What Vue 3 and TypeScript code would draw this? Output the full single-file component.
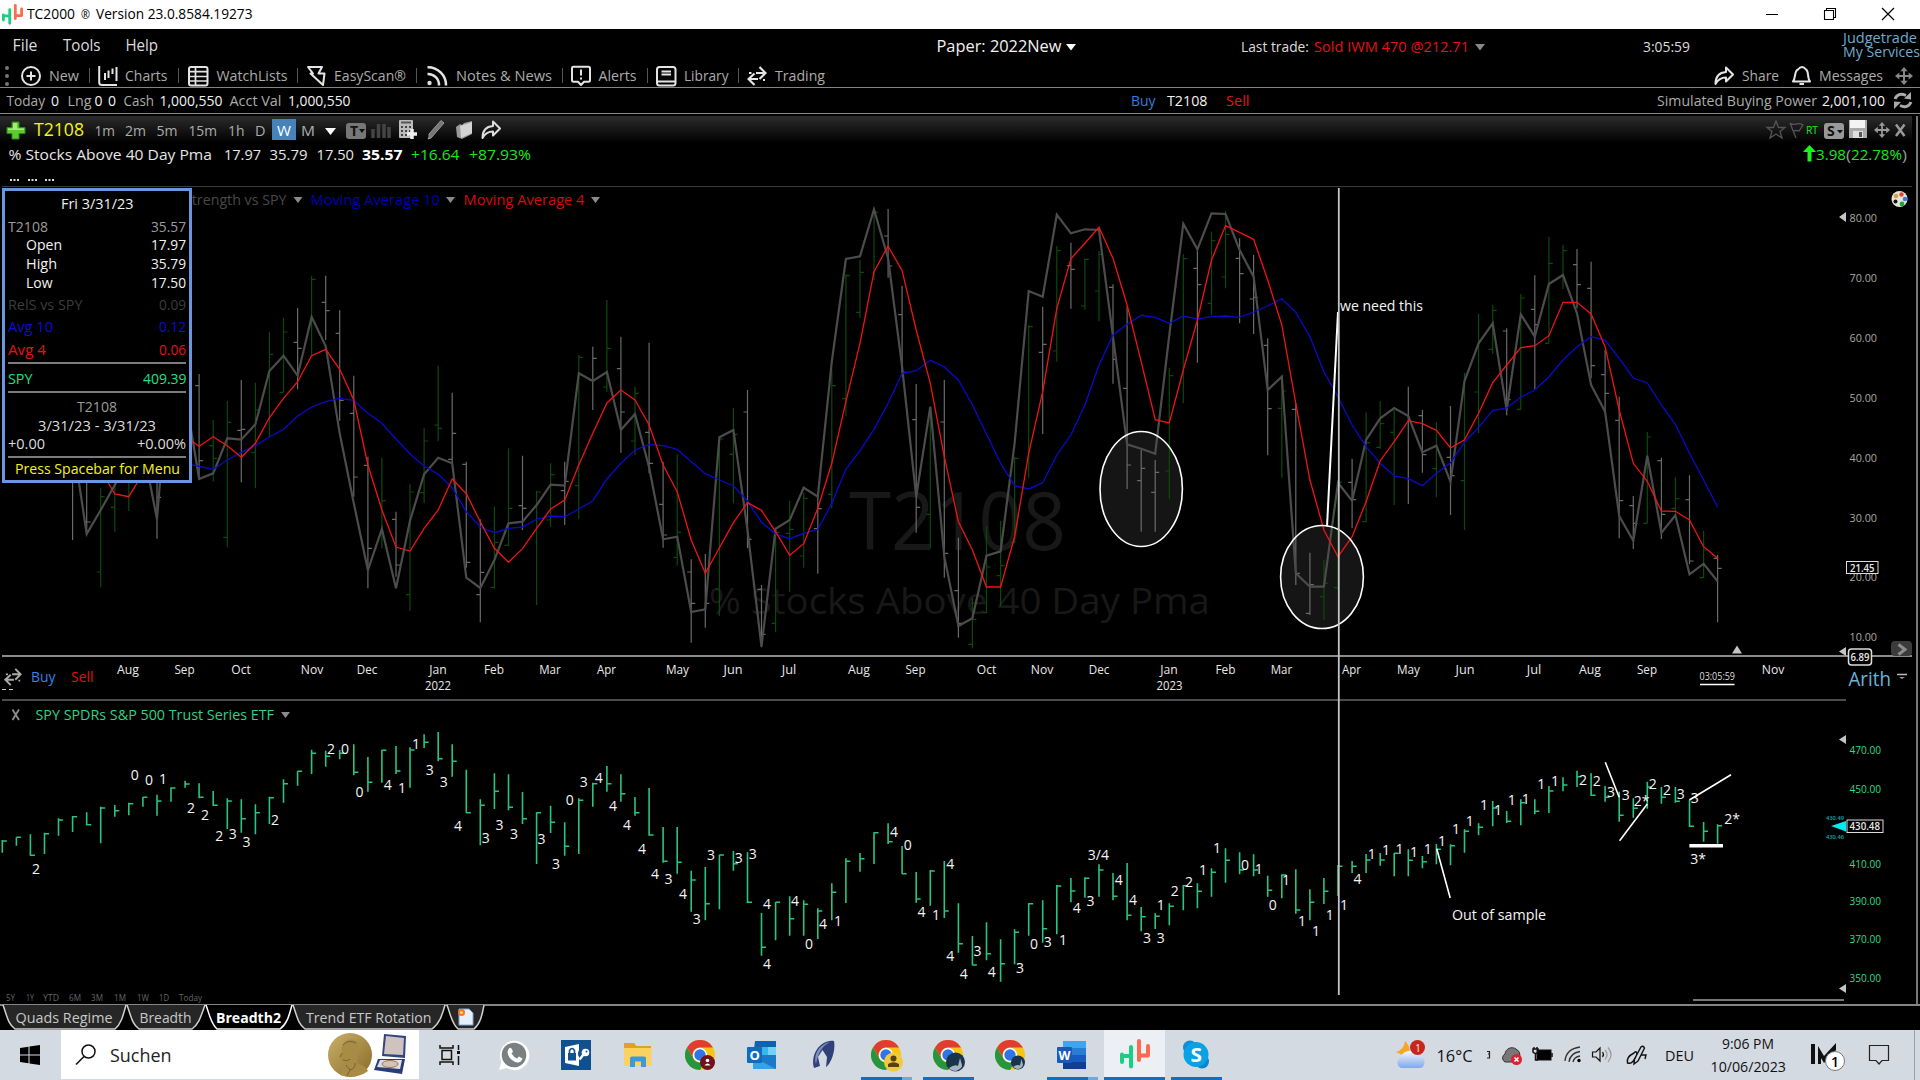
<script setup lang="ts">
import { h, type FunctionalComponent } from 'vue'

interface LabelProps { t: string; w: number; x?: number; s?: number }

// One run of text fitted to a known width, with optional leading space.
const T: FunctionalComponent<LabelProps> = (p) =>
  h('svg', { class: 't', width: (p.x ?? 0) + p.w, height: 20 }, [
    h('text', { x: p.x ?? 0, y: 15, 'font-size': p.s ?? 15, fill: 'currentColor', textLength: p.w, lengthAdjust: 'spacingAndGlyphs' }, p.t),
  ])
T.props = ['t', 'w', 'x', 's']

const barX = (i: number) => +(2.3 + 14.06 * i).toFixed(1)
const topY = (v: number) => +(180 + v / 3).toFixed(1)
const lowY = (v: number) => +(690 + v / 3).toFixed(1)

// Weekly breadth bars: colour, high, low, open, close (0 = no tick).
const breadth = `w,905,1080,0,0 w,905,1062,0,1026 g,925,1222,1176,950 g,905,1055,982,0 g,905,993,0,0 g,800,900,0,0 w,905,1076,0,952 g,700,850,0,0 g,700,850,0,0
w,582,895,617,842 g,720,905,797,835 g,663,1102,1072,727 w,600,907,751,748 g,608,925,817,690 g,455,770,0,523 g,413,637,637,456 w,384,628,487,505 g,287,525,0,298 w,287,480,367,392
w,391,722,460,661 w,587,950,700,891 w,830,1225,856,1105 g,833,1105,0,962 w,995,1190,1018,1155 g,913,1293,1244,936 g,745,970,938,783 g,557,783,735,745 w,638,850,838,760 w,845,1163,853,1147
w,1018,1327,1244,1177 g,980,1227,1222,1087 g,805,1098,1096,985 w,827,1050,977,985 g,932,1275,0,936 g,850,1040,1020,884 w,845,1035,932,904 g,525,1017,917,532 w,500,690,600,535 g,360,635,621,505
w,470,818,566,696 g,620,825,783,640 w,488,880,757,850 w,845,1103,973,1065 g,823,1157,1132,1057 w,1138,1388,1176,1270 w,1122,1343,0,1270 g,775,1307,1227,777 g,685,970,823,763 w,630,1105,696,1078
w,1215,1402,1228,1363 g,1060,1357,1330,1057 g,962,1235,1060,1048 g,938,1163,1128,955 w,950,1181,1046,986 g,570,985,943,617 g,283,707,656,287 g,240,415,397,277 g,90,300,0,97 w,87,293,168,258
w,317,590,404,577 w,612,1058,719,982 g,690,1105,1003,0 w,600,1193,726,1120 w,1073,1373,1232,1330 g,1255,1405,1393,1318 g,1040,1300,1298,1161 g,1023,1278,1187,1157 g,830,1090,1088,835 g,435,893,0,440
w,380,762,517,493 g,198,545,513,212 w,188,386,257,268 g,235,390,378,238 g,213,424,333,223 w,313,611,322,538 w,380,927,625,855 w,810,1055,902,865 w,840,1055,937,877 g,563,958,873,587
g,223,670,0,236 w,210,548,265,314 g,155,405,370,182 g,93,325,291,163 w,175,430,235,281 w,225,462,357,352 w,475,826,496,686 g,585,893,685,633 w,670,1215,688,1180 w,1118,1305,1300,1214
g,1140,1320,1250,1210 g,905,1230,1223,907 w,836,1045,907,959 g,697,1027,1025,788 g,663,806,802,731 g,690,975,757,0 w,620,972,0,0 w,690,878,707,824 g,725,952,866,0 w,678,1005,832,887
g,578,1050,902,0 g,401,760,636,0 g,375,521,508,391 w,445,706,453,659 g,342,690,688,354 w,286,627,388,434 g,170,490,490,250 g,195,327,0,212 w,207,385,254,314 w,245,595,325,557
w,510,700,584,640 w,650,1075,721,962 w,948,1107,977,1030 g,756,1030,1030,771 w,833,1077,842,1003 g,892,1005,985,956 w,886,1153,959,1143 g,1052,1195,1193,1110 w,1125,1327,1135,1165`
  .split(/\s+/).map((row, k) => {
    const [c, ...n] = row.split(',')
    const [hi, lo, op, cl] = n.map(Number)
    const x = barX(k + 5)
    let d = `M${x} ${topY(hi)}V${topY(lo)}`
    if (op) d += `M${x - 4} ${topY(op)}H${x}`
    if (cl) d += `M${x} ${topY(cl)}H${x + 4}`
    return { c, d }
  })

const joinLine = (first: number, s: string) =>
  s.trim().split(/\s+/).map((v, k) => `${barX(first + k)},${topY(+v)}`).join(' ')

const strength = joinLine(5, `780 1062 990 915 830 800 1018 500 640 897 880 775 779 733 573 527 587 411 498 760 970 1170 1047 1225 1022 883 833 850 1193 1224 1140 1030 1025 975 914 917 580 603 576 750 702
862 1078 1070 1296 1288 772 750 1050 1400 1046 1020 923 950 545 237 229 88 235 560 950 680 1130 1338 1315 1127 1114 790 333 350 104 160 148 150 470 793 806 821 465 131 208 100 102 210 290 630
590 1180 1220 1220 908 962 780 715 684 708 817 797 905 603 490 430 690 403 470 312 285 400 615 695 1008 1082 827 1058 1006 1183 1151 1204`)
const avg4 = joinLine(7, `870 942 950 880 800 760 770 799 770 797 832 790 713 655 605 527 508 568 660 855 990 1101 1113 1045 990 897 941 1025 1105 1147 1106 1045 987 960 855 760 669 630 660
735 855 935 1080 1180 1103 1028 968 991 1055 1126 1091 985 850 665 490 275 198 272 450 610 830 1025 1110 1221 1221 1070 820 635 385 236 190 142 235 375 545 719 729 570 420 240 137 157 178 300
435 670 900 1050 1130 1070 965 842 785 722 731 751 804 779 700 608 555 503 497 467 367 367 402 500 690 850 904 993 994 1020 1100 1135`)
const avg10 = joinLine(13, `850 859 868 840 817 797 771 748 708 681 665 655 661 700 730 777 822 858 883 923 995 1041 1058 1045 1041 1018 1008 1010 987 962 897 850 810
794 797 808 845 881 900 917 963 1027 1062 1076 1060 1048 970 868 812 748 670 580 572 541 560 600 675 762 850 917 927 908 825 765 675 555 465 433 406 412 430 408 417 410 408 412 396 378
356 397 470 575 650 735 800 850 888 896 917 880 848 787 742 692 684 652 630 590 540 500 470 480 535 594 609 675 733 820 900 981`)

// SPY weekly bars: high, low, close.
const spy = `450,488,453 442,467,442 433,497,496 428,492,431 385,437,390 378,426,380 367,406,404 350,460,354 345,380,362 338,376,341 321,350,322 314,377,333 292,335,294 272,293,282 280,325,322 303,348,346
325,417,333 328,428,386 343,433,368 320,402,323 268,338,281 243,287,244 179,252,190 182,230,199 180,208,190 163,256,247 201,305,277 179,278,181 168,252,243 172,293,180 133,174,157 126,214,206
163,260,214 239,369,368 328,466,346 250,357,304 253,361,352 306,402,386 367,522,368 347,429,397 397,497,469 325,492,331 278,350,281 228,305,281 253,335,311 321,377,368 294,437,435 411,518,514
411,551,517 542,665,570 531,691,641 494,658,495 483,542,521 487,639,637 669,797,772 636,751,637 619,737,686 631,737,643 655,747,663 580,691,607 505,639,514 489,545,506 427,522,428 400,462,455
468,552,551 546,638,627 540,647,543 513,684,663 640,788,761 738,826,825 697,811,791 748,875,821 718,823,727 640,737,641 631,758,716 585,733,588 564,637,603 562,623,565 523,620,540 549,631,619
519,691,676 651,724,680 670,717,679 640,706,649 585,661,587 580,655,604 535,620,547 475,578,511 487,553,540 493,559,540 557,620,601 553,625,555 538,671,660 598,691,637 564,642,604 525,618,529
513,549,529 492,549,510 489,527,510 489,559,490 478,559,511 498,535,515 462,523,478 463,526,467 418,488,424 400,436,412 333,409,354 363,399,394 328,406,338 328,373,364 288,369,303 262,304,285
242,291,260 250,318,316 288,335,322 305,395,376 325,383,355 275,356,291 291,341,322 291,338,334 331,411,409 396,455,424 403,461,407`
  .split(/\s+/).map((row, i) => {
    const [hi, lo, cl] = row.split(',').map(Number)
    return `M${barX(i)} ${lowY(hi)}V${lowY(lo)}M${barX(i)} ${lowY(cl)}h4.5`
  }).join('')

const placeMarks = (left: number, s: string) =>
  s.trim().split(/\s+/).map((m) => {
    const [x, y, t] = m.split(',')
    return { x: +(left + +x / 2.45).toFixed(1), y: +(lowY(+y) + 5).toFixed(1), t }
  })
const marks = [
  ...placeMarks(0, `88,537,2 330,254,0 365,269,0 399,266,1 468,353,2 502,375,2 537,438,2 570,431,3 604,455,3 674,390,2 811,176,2 845,176,0 881,305,0 950,284,4 985,293,1 1019,161,1 1053,239,3 1087,276,3
  1122,407,4 1190,443,3 1224,404,3 1259,431,3 1327,446,3 1362,521,3 1396,329,0 1430,275,3 1467,264,4 1502,348,4 1536,404,4`),
  ...placeMarks(640, `5,477,4 37,551,4 70,566,3 105,611,4 139,686,3 174,494,3 242,503,3 276,491,3 311,641,4 311,822,4 380,632,4 414,761,0 448,702,4 485,692,1 622,425,4 656,464,0 690,665,4 725,674,1
  760,521,4 760,797,4 793,852,4 827,782,3 862,845,4 931,834,3 965,761,0 999,755,3 1036,749,1 1070,653,4 1104,632,3 1123,494,3/4 1173,569,4 1208,629,4 1242,743,3 1276,743,3 1276,644,1 1310,602,2
  1345,575,2 1379,539,1 1414,473,1 1482,524,0 1516,536,1 1550,645,0`),
  ...placeMarks(1280, `15,569,1 54,694,1 88,722,1 122,674,1 157,644,1 190,566,4 225,491,1 260,479,1 293,476,1 328,485,1 362,476,1 397,452,1 431,416,1 465,392,1 500,344,1 534,359,1 568,329,1 602,326,1
  640,281,1 674,272,1 742,269,2 776,272,2 811,305,3 847,314,3 886,332,2* 913,281,2 948,300,2 982,311,3 1016,325,3 1108,388,2* 1024,508,3*`),
]

const monthWidth: Record<string, number> = { Aug: 22, Sep: 20, Oct: 19.5, Nov: 22.5, Dec: 20.5, Jan: 17.5, Feb: 20, Mar: 21.5, Apr: 19, May: 23, Jun: 19, Jul: 14.5 }
const months = ([['Aug', 128], ['Sep', 184.5], ['Oct', 241], ['Nov', 312], ['Dec', 367], ['Jan', 438], ['Feb', 494], ['Mar', 550], ['Apr', 606.5], ['May', 677.5], ['Jun', 733], ['Jul', 789], ['Aug', 859], ['Sep', 915.5], ['Oct', 986.5], ['Nov', 1042], ['Dec', 1099], ['Jan', 1169], ['Feb', 1225.5], ['Mar', 1281.5], ['Apr', 1351.5], ['May', 1408.5], ['Jun', 1465], ['Jul', 1534], ['Aug', 1590], ['Sep', 1647], ['Nov', 1773]] as [string, number][])
  .map(([t, c]) => ({ t, w: monthWidth[t], x: c - monthWidth[t] / 2 }))
const breadthAxis = [['80.00', 222], ['70.00', 282], ['60.00', 342], ['50.00', 402], ['40.00', 462], ['30.00', 522], ['20.00', 581], ['10.00', 641]] as [string, number][]
const spyAxis = [['470.00', 754.5], ['450.00', 793.3], ['410.00', 868.3], ['390.00', 905.8], ['370.00', 943], ['350.00', 982.2]] as [string, number][]
const ranges = [['5Y', 6, 9], ['1Y', 26, 8], ['YTD', 43, 16], ['6M', 69, 12], ['3M', 91, 12], ['1M', 114, 12], ['1W', 137, 12], ['1D', 159, 10], ['Today', 179, 23]] as [string, number, number][]
</script>

<template>
  <div class="app">
    <svg width="0" height="0" class="defs">
      <defs>
        <linearGradient id="gold" x1="0" y1="0" x2="1" y2="1"><stop offset="0" stop-color="#c9b06a" /><stop offset="1" stop-color="#8a6b28" /></linearGradient>
        <linearGradient id="cloud" x1="0" y1="0" x2="0" y2="1"><stop offset="0" stop-color="#f2f6ff" /><stop offset="1" stop-color="#7fa9ea" /></linearGradient>
        <symbol id="chrome" viewBox="0 0 30 30">
          <circle cx="15" cy="15" r="15" fill="#f9c513" />
          <path d="M2 7.5A15 15 0 0 1 28 7.5H15A7.5 7.5 0 0 0 8.5 18.7Z" fill="#e03c31" />
          <path d="M2 7.5A15 15 0 0 0 15 30L21.5 18.7A7.5 7.5 0 0 1 8.5 18.7Z" fill="#25963f" />
          <circle cx="15" cy="15" r="7.2" fill="#fff" /><circle cx="15" cy="15" r="5.7" fill="#2f74e8" />
        </symbol>
        <symbol id="tc" viewBox="0 0 30 30">
          <path d="M2 15.500V23M11 8V27.500M2 17H11" stroke="#18cf83" stroke-width="4" stroke-linecap="round" fill="none" />
          <path d="M19 2V21M28 7V16.500M19 16.500H28" stroke="#fb6b50" stroke-width="4" stroke-linecap="round" fill="none" />
        </symbol>
        <symbol id="share" viewBox="0 0 20 20"><path d="M12 1.500L19 8.500L12 15.500V11.500C7 11.500 4 13.500 1.500 18C1.500 11 5 6.500 12 6V1.500Z" fill="none" stroke="currentColor" stroke-width="2" stroke-linejoin="round" /></symbol>
        <symbol id="move" viewBox="0 0 20 20"><path d="M10 3V17M3 10H17" stroke="currentColor" stroke-width="2.200" /><path d="M10 0L14 4.800H6ZM10 20L14 15.200H6ZM0 10L4.800 6V14ZM20 10L15.200 6V14Z" fill="currentColor" /></symbol>
        <symbol id="swap" viewBox="0 0 20 20"><path d="M12.500 1L18.500 7L12.500 13M9 7H18M7.500 7.500L1.500 13L7.500 19M2 13H11" fill="none" stroke="currentColor" stroke-width="2.200" /><path d="M2 7H4.500M16 14H18" stroke="currentColor" stroke-width="2" /></symbol>
      </defs>
    </svg>

    <header class="title">
      <svg class="logo" width="21" height="21"><use href="#tc" width="21" height="21" /></svg>
      <T t="TC2000" :x="4" :w="48" :s="14.500" /><T t="®" :x="6" :w="9" :s="12.500" /><T t="Version 23.0.8584.19273" :x="6" :w="156.500" :s="14.500" />
      <div class="winbtns">
        <svg width="12" height="14"><path d="M0 7.500H12" stroke="#000" /></svg>
        <svg width="12" height="14"><path d="M.5 3.500H9.500V12.500H.5ZM2.500 3.500V1.500H11.500V10.500H9.500" fill="none" stroke="#000" stroke-width="1.100" /></svg>
        <svg width="12" height="14"><path d="M0 1L12 13M12 1L0 13" stroke="#000" stroke-width="1.200" /></svg>
      </div>
    </header>

    <nav class="menu">
      <T t="File" :x="12.500" :w="25" :s="16" /><T t="Tools" :x="25" :w="37.500" :s="16" /><T t="Help" :x="25.500" :w="32.500" :s="16" />
      <T class="white low" t="Paper: 2022New" :x="778.500" :w="125" :s="16" />
      <svg width="16" height="20"><path d="M4 8H14L9 14.500Z" fill="#fff" /></svg>
      <T class="low" t="Last trade:" :x="163" :w="68" :s="14" /><T class="red low" t="Sold IWM 470 @212.71" :x="5" :w="155" :s="14" />
      <svg width="17" height="20"><path d="M6 8H16L11 14.500Z" fill="#888" /></svg>
      <T class="low" t="3:05:59" :x="157" :w="47" :s="14" />
      <div class="account"><T t="Judgetrade" :w="74" :s="14" /><T t="My Services" :w="77" :s="14" /></div>
    </nav>

    <nav class="tools">
      <svg width="21" height="22"><g fill="#777"><circle cx="7" cy="2" r="2" /><circle cx="7" cy="10" r="2" /><circle cx="7" cy="18" r="2" /></g></svg>
      <svg width="20" height="22" class="ic"><circle cx="10" cy="10" r="9" /><path d="M10 5.500V14.500M5.500 10H14.500" /></svg>
      <T t="New" :x="8" :w="30" /><i class="sep" />
      <svg width="20" height="22" class="ic"><path d="M1.200 0V16.500Q1.200 19 4 19H19M7 7V14M10.500 4.500V12M14.500 2.500V8M18.500 1V15" stroke-width="2" /></svg>
      <T t="Charts" :x="7" :w="42.500" /><i class="sep" />
      <svg width="22" height="22" class="ic"><rect x="2" y="1" width="18.500" height="18.500" rx="2" /><path d="M2 5.700H20M2 10.500H20M2 15H20M8.500 1V19.500" stroke-width="1.700" /></svg>
      <T t="WatchLists" :x="7.500" :w="71" /><i class="sep" />
      <svg width="20" height="22" class="ic"><path d="M2 1H16L12.500 7.500H18.500L17 19L4.500 7.500H7Z" /></svg>
      <T t="EasyScan®" :x="8" :w="72" /><i class="sep" />
      <svg width="24" height="22" class="ic"><path d="M2.500 1.200A18 18 0 0 1 21 19.500M2.500 8A11 11 0 0 1 14 19.500" stroke-width="2.500" /><circle cx="4.500" cy="17" r="2.200" fill="#ddd" stroke="none" /></svg>
      <T t="Notes &amp; News" :x="7" :w="96" /><i class="sep" />
      <svg width="20" height="22" class="ic"><path d="M1 2Q1 .8 2.500.8H17.500Q19 .8 19 2.500V14Q19 15.800 17.500 15.800H13L10 19L7 15.800H2.500Q1 15.800 1 14ZM10 3.500V9.500M10 11.500V13.500" /></svg>
      <T t="Alerts" :x="7.500" :w="38" /><i class="sep" />
      <svg width="20" height="22" class="ic"><rect x="1" y="1" width="18.500" height="18.500" rx="2.500" /><path d="M1.500 15.500H19M5.500 5.500H15M5.500 8.500H15" /></svg>
      <T t="Library" :x="8" :w="44.500" /><i class="sep" />
      <svg width="20" height="22" class="lit"><use href="#swap" width="20" height="20" /></svg>
      <T t="Trading" :x="8" :w="50" />
      <div class="right">
        <svg width="20" height="22" class="lit"><use href="#share" width="20" height="20" /></svg>
        <T t="Share" :x="8" :w="37" />
        <svg width="33" height="22" class="ic"><path d="M15 15.500C18 12 16 5 20 3.500Q22 1 24 1Q26 1 28 3.500C31 5 29 12 32 15.500ZM21.500 18H26" transform="translate(-1 0)" /></svg>
        <T t="Messages" :x="7" :w="64" />
        <svg width="31" height="22" class="dim"><use href="#move" x="12" y="1" width="18" height="18" /></svg>
      </div>
    </nav>

    <div class="acct">
      <T t="Today" :x="6.500" :w="38.500" /><T class="white" t="0" :x="6" :w="8" /><T t="Lng" :x="8.500" :w="24" /><T class="white" t="0" :x="2.500" :w="8" /><T class="white" t="0" :x="6" :w="8" />
      <T t="Cash" :x="7.500" :w="30.500" /><T class="white" t="1,000,550" :x="5.500" :w="63" /><T t="Acct Val" :x="6.500" :w="52" /><T class="white" t="1,000,550" :x="7" :w="62.500" />
      <T class="blue" t="Buy" :x="780" :w="24.500" :s="14.500" /><T class="white" t="T2108" :x="12" :w="40.500" :s="14.500" /><T class="red" t="Sell" :x="18" :w="23.500" :s="14.500" />
      <div class="right">
        <T t="Simulated Buying Power" :w="160" /><T class="white" t="2,001,100" :x="5" :w="63" />
        <svg width="27" height="20"><path d="M10 8Q13 1 21 4.500M26 11Q23 18 15 14.500" fill="none" stroke="#aaa" stroke-width="3" /><path d="M19 7.500L26 1V8.500ZM16 11L9 18V10.500Z" fill="#aaa" /></svg>
      </div>
    </div>

    <section class="head">
      <div class="hrow">
        <svg width="32" height="24"><path d="M10 3H17V8.500H23V14.500H17V20H10V14.500H5V8.500H10Z" fill="#5ccb2c" stroke="#2d8a12" /><path d="M11 4H15V9.500H22V11H6V9.500H11Z" fill="#a2ec78" /></svg>
        <T class="yellow" t="T2108" :x="0" :w="50" :s="18" />
        <T t="1m" :x="10.500" :w="20.500" /><T t="2m" :x="10" :w="21" /><T t="5m" :x="10.500" :w="21" /><T t="15m" :x="10.500" :w="28.500" /><T t="1h" :x="11" :w="16.500" /><T t="D" :x="11" :w="10.500" />
        <span class="on"><T t="W" :x="5" :w="14" /></span><T t="M" :x="5" :w="14" />
        <svg width="190" height="24">
          <path d="M10 9H21L15.500 16Z" fill="#fff" />
          <rect x="31" y="4" width="20" height="16" rx="3" fill="#777" /><text x="35" y="17" font-size="14" font-weight="700" fill="#111">T</text><path d="M44 10H50L47 14Z" fill="#111" />
          <path d="M58 19V10M63.500 19V5M69 19V5M74 19V8" stroke="#444" stroke-width="3.500" />
          <rect x="84" y="1" width="14" height="18" rx="1" fill="#bbb" /><path d="M86 3.500H96" stroke="#555" stroke-width="2" /><path d="M86 8H96M86 12H96M86 16H96" stroke="#444" stroke-width="2" stroke-dasharray="2 2" /><path d="M97 10V20M92 15H102" stroke="#eee" stroke-width="3.500" />
          <path d="M114 18L113 20L116 19L129 4L126 1.500L114 15Z" fill="#777" stroke="#999" />
          <path d="M141 8L145 5L147 6L149 4L157 2V15L147 20L142 18Z" fill="#999" /><path d="M145 7L157 3V14L146 19Z" fill="#d4d4d4" />
          <use href="#share" x="166" y="1" width="20" height="20" color="#ddd" />
        </svg>
        <div class="right">
          <svg width="40" height="24"><path d="M11 2L13.500 8.500H20L15 12.500L17 19L11 15L5 19L7 12.500L2 8.500H8.500Z" fill="none" stroke="#555" stroke-width="1.300" /><path d="M25 4L31 19M25 4C29 8 32 2 38 6L34 12Q31 11 28 12" fill="none" stroke="#555" stroke-width="1.300" /></svg>
          <T class="lime rt" t="RT" :x="1" :w="12" :s="11" />
          <svg width="94" height="24"><rect x="6" y="4" width="20" height="16" rx="3" fill="#999" /><text x="9" y="17" font-size="14" font-weight="700" fill="#111">S</text><path d="M19 11H25L22 14.500Z" fill="#111" /><rect x="31" y="1" width="18" height="18" fill="#aaa" /><path d="M32 1H47V9H32Z" fill="#f4f4f4" /><path d="M35 12H45V19H35Z" fill="#ddd" /><path d="M41 13H44V18H41Z" fill="#555" /><use href="#move" x="56" y="3" width="16" height="16" color="#999" /><path d="M78 5.500L86.500 17M86.500 5.500L78 17" stroke="#999" stroke-width="2.500" /></svg>
        </div>
      </div>
      <div class="hrow2">
        <T t="% Stocks Above 40 Day Pma" :x="8.500" :w="203.500" /><T t="17.97" :x="12" :w="37" /><T t="35.79" :x="8.500" :w="38" /><T t="17.50" :x="8.500" :w="37.500" /><T class="bold" t="35.57" :x="8" :w="40.500" />
        <T class="lime" t="+16.64" :x="9" :w="48.500" /><T class="lime" t="+87.93%" :x="9" :w="62" />
        <div class="right"><svg width="13" height="20"><path d="M6.500 0L13 7H8.500V16.500H4.500V7H0Z" fill="#1bf41b" /></svg><T class="lime" t="3.98" :w="30" /><T class="grey" t="(" :w="5" /><T class="lime" t="22.78%" :w="51" /><T class="grey" t=")" :w="5" /></div>
      </div>
      <svg class="dots" width="60" height="6"><path d="M10 3H19M28 3H37M45 3H54" stroke="#ddd" stroke-width="2" stroke-dasharray="2 1.500" /></svg>
    </section>

    <main class="charts">
      <svg width="1920" height="818" viewBox="0 186 1920 818">
        <path d="M2 186.500H1912" stroke="#3a3a3a" />
        <g fill="#181818"><text x="849" y="549.500" font-size="80" textLength="217" lengthAdjust="spacingAndGlyphs">T2108</text><text x="709" y="613.500" font-size="37" textLength="501" lengthAdjust="spacingAndGlyphs">% Stocks Above 40 Day Pma</text></g>
        <g fill="#151515"><ellipse cx="1141.200" cy="489" rx="41.200" ry="57.500" /><ellipse cx="1322" cy="577" rx="41.400" ry="51.500" /></g>
        <path v-for="(b, i) in breadth" :key="i" :d="b.d" :class="b.c" />
        <polyline :points="strength" fill="none" stroke="#4c4c4c" stroke-width="2.200" />
        <polyline :points="avg10" fill="none" stroke="#0a0ad0" stroke-width="1.300" />
        <polyline :points="avg4" fill="none" stroke="#f01414" stroke-width="1.300" />
        <g fill="none" stroke="#fff" stroke-width="1.600"><ellipse cx="1141.200" cy="489" rx="41.200" ry="57.500" /><ellipse cx="1322" cy="577" rx="41.400" ry="51.500" /><path d="M1338 312L1327 526.500" stroke-width="2" /></g>

        <g font-size="15">
          <text x="184" y="205" fill="#484848" textLength="102.500" lengthAdjust="spacingAndGlyphs">Strength vs SPY</text>
          <text x="310.500" y="205" fill="#0000b4" textLength="129.500" lengthAdjust="spacingAndGlyphs">Moving Average 10</text>
          <text x="463.500" y="205" fill="#d40c0c" textLength="121" lengthAdjust="spacingAndGlyphs">Moving Average 4</text>
        </g>
        <path d="M293.500 197H302.500L298 203ZM446 197H455L450.500 203ZM591 197H600L595.500 203ZM281 712H290L285.500 718Z" fill="#8a8a8a" />

        <path d="M2 656H1912" stroke="#b8bcb8" stroke-width="1.600" />
        <path d="M2 700H1846" stroke="#4c4c4c" stroke-width="2" />
        <g fill="#e8e8e8" font-size="13">
          <text v-for="m in months" :key="m.x" :x="m.x" y="674" :textLength="m.w" lengthAdjust="spacingAndGlyphs">{{ m.t }}</text>
          <text x="425" y="690" textLength="26" lengthAdjust="spacingAndGlyphs">2022</text><text x="1156.500" y="690" textLength="26" lengthAdjust="spacingAndGlyphs">2023</text>
        </g>
        <use href="#swap" x="4" y="667" width="18" height="20" color="#aaa" /><path d="M2 689.500H6M9 689.500H13" stroke="#ccc" />
        <text x="31" y="681.500" font-size="15" fill="#2f86e8" textLength="24.500" lengthAdjust="spacingAndGlyphs">Buy</text><text x="71" y="681.500" font-size="15" fill="#e01010" textLength="22.500" lengthAdjust="spacingAndGlyphs">Sell</text>
        <text x="1699.500" y="680" font-size="10.500" fill="#ddd" textLength="35.500" lengthAdjust="spacingAndGlyphs">03:05:59</text><path d="M1700 684.500H1734.500" stroke="#fff" stroke-width="1.400" />

        <path d="M1846 212V222L1839 217ZM1846 647V656L1839 651.500ZM1846 735V744L1839 739.500ZM1846 984V993L1839 988.500ZM1732 653.500H1742L1737 645.500Z" fill="#c4c4c4" />
        <g font-size="11.500" fill="#a8a8a8"><text v-for="a in breadthAxis" :key="a[1]" :x="1849.500" :y="a[1]" textLength="27.500" lengthAdjust="spacingAndGlyphs">{{ a[0] }}</text></g>
        <g font-size="11.500" fill="#2bdc8b"><text v-for="a in spyAxis" :key="a[1]" :x="1849.500" :y="a[1] - .5" textLength="31.500" lengthAdjust="spacingAndGlyphs">{{ a[0] }}</text></g>
        <g fill="#000" stroke="#ddd"><rect x="1846.500" y="561.500" width="31.500" height="12" /><rect x="1848.500" y="649" width="23" height="16" rx="3" stroke-width="1.500" /><rect x="1847" y="820" width="36" height="12.500" /></g>
        <g font-size="11" font-weight="600" fill="#e8e8e8"><text x="1850" y="571.500" textLength="24.500" lengthAdjust="spacingAndGlyphs">21.45</text><text x="1850.500" y="661" textLength="19" lengthAdjust="spacingAndGlyphs">6.89</text><text x="1849.500" y="830" textLength="30.500" lengthAdjust="spacingAndGlyphs">430.48</text></g>
        <path d="M1831 826L1846 821V831.500Z" fill="#00eaf2" />
        <g font-size="6" fill="#16a8b4" font-weight="600"><text x="1826" y="819.500" textLength="18" lengthAdjust="spacingAndGlyphs">430.49</text><text x="1826" y="838.500" textLength="18" lengthAdjust="spacingAndGlyphs">430.46</text></g>
        <text x="1848.500" y="686" font-size="20" fill="#69b4da" textLength="42.500" lengthAdjust="spacingAndGlyphs">Arith</text><path d="M1897 674.500H1907" stroke="#bbb" stroke-width="1.500" /><path d="M1899 677H1905L1902 679Z" fill="#999" />
        <circle cx="1899.500" cy="199" r="8" fill="#e8e4dc" /><circle cx="1896" cy="196" r="2.300" fill="#d6a53a" /><circle cx="1901.500" cy="194.500" r="2.200" fill="#e0492e" /><circle cx="1905" cy="199" r="2.300" fill="#2f7be0" /><circle cx="1902" cy="204" r="2.400" fill="#27a33b" /><circle cx="1895.500" cy="201.500" r="2" fill="#111" />
        <rect x="1891" y="641" width="21" height="15" rx="4" fill="#3b3b3b" /><path d="M1898.500 644.500L1905 649.500L1898.500 654.500" fill="none" stroke="#8c8c8c" stroke-width="3" />

        <path d="M12.500 709.500L19 720M19 709.500L12.500 720" stroke="#8a8a8a" stroke-width="1.900" />
        <text x="35.500" y="720" font-size="15" fill="#2bd487" textLength="238.500" lengthAdjust="spacingAndGlyphs">SPY SPDRs S&amp;P 500 Trust Series ETF</text>
        <path :d="spy" stroke="#27c581" stroke-width="1.600" fill="none" />
        <path d="M1338.800 188V995" stroke="#c4c4c4" stroke-width="1.800" />
        <g font-size="14" fill="#f4f4f4" text-anchor="middle"><text v-for="(m, i) in marks" :key="i" :x="m.x" :y="m.y">{{ m.t }}</text></g>
        <g font-size="14.500" fill="#f4f4f4"><text x="1340" y="311" textLength="83" lengthAdjust="spacingAndGlyphs">we need this</text><text x="1452" y="920" textLength="94" lengthAdjust="spacingAndGlyphs">Out of sample</text></g>
        <path d="M1605.300 762.300L1619.200 797.300M1619.600 840.700L1647.300 804M1689.400 800L1731 774.700M1436.700 848.700L1450.200 898" stroke="#fff" stroke-width="1.600" />
        <path d="M1689.400 845.700H1723" stroke="#fff" stroke-width="3.500" />
        <g font-size="8.500" fill="#666"><text v-for="r in ranges" :key="r[0]" :x="r[1]" y="1001" :textLength="r[2]" lengthAdjust="spacingAndGlyphs">{{ r[0] }}</text></g>
        <path d="M1693 1000H1844" stroke="#777" stroke-width="2" />
      </svg>

      <aside class="tip">
        <div class="line first"><T t="Fri 3/31/23" :w="72.500" /></div>
        <div class="line pair grey r18"><T t="T2108" :w="40" /><T t="35.57" :w="35" /></div>
        <div class="line pair in r18"><T t="Open" :w="36" /><T t="17.97" :w="35" /></div>
        <div class="line pair in r18"><T t="High" :w="31" /><T t="35.79" :w="35" /></div>
        <div class="line pair in r22"><T t="Low" :w="26.500" /><T t="17.50" :w="35" /></div>
        <div class="line pair dark r22"><T t="RelS vs SPY" :w="74.500" /><T t="0.09" :w="27" /></div>
        <div class="line pair navy r22"><T t="Avg 10" :w="45" /><T t="0.12" :w="27" /></div>
        <div class="line pair red r22"><T t="Avg 4" :w="38" /><T t="0.06" :w="27" /></div>
        <hr>
        <div class="line pair green r22"><T t="SPY" :w="24.500" /><T t="409.39" :w="43.500" /></div>
        <hr>
        <div class="line grey r19 up"><T t="T2108" :w="40" /></div>
        <div class="line pale r19"><T t="3/31/23 - 3/31/23" :w="118" /></div>
        <div class="line pair pale r21"><T t="+0.00" :w="37" /><T t="+0.00%" :w="49" /></div>
        <hr class="last">
        <div class="line yellow"><T t="Press Spacebar for Menu" :w="165" /></div>
      </aside>
      <i class="edge" />
    </main>

    <footer class="tabs">
      <svg width="500" height="26">
        <g fill="#262626" stroke="#d0d0d0" stroke-width="1.500">
          <path d="M3 1C7 12 8 20 15 25H115C121 20 123 12 126 1" /><path d="M127 1C131 12 132 20 139 25H192C199 20 201 12 205 1" /><path d="M293 1C297 12 298 20 305 25H432C439 20 442 12 445 1" /><path d="M447 1C451 12 452 20 458 25H474C480 20 482 12 484 1" />
          <path d="M206 1C210 12 211 20 217 25H280C287 20 289 12 292 1" fill="#000" stroke="#fff" />
        </g>
        <g font-size="15" fill="#c8c8c8"><text x="15.500" y="18.500" textLength="97" lengthAdjust="spacingAndGlyphs">Quads Regime</text><text x="139.500" y="18.500" textLength="52" lengthAdjust="spacingAndGlyphs">Breadth</text><text x="216" y="18.500" font-weight="700" fill="#fff" textLength="65" lengthAdjust="spacingAndGlyphs">Breadth2</text><text x="306" y="18.500" textLength="125.500" lengthAdjust="spacingAndGlyphs">Trend ETF Rotation</text></g>
        <path d="M459 5H469L473 9V21H459Z" fill="#e6effb" stroke="#86a6cc" /><circle cx="461.500" cy="8.500" r="3.500" fill="#f0772b" /><circle cx="461.500" cy="8.500" r="1.600" fill="#ffd36b" />
      </svg>
    </footer>

    <footer class="task">
      <div class="start"><svg width="20" height="20"><path d="M0 3L8.500 1.700V9.400H0ZM9.500 1.500L20 0V9.400H9.500ZM0 10.500H8.500V18.300L0 17ZM9.500 10.500H20V20L9.500 18.500Z" /></svg></div>
      <div class="search">
        <svg width="22" height="22"><circle cx="13.500" cy="7.500" r="6.500" fill="none" stroke="#111" stroke-width="1.500" /><path d="M9 12.500L1 20.500" stroke="#111" stroke-width="1.600" /></svg>
        <T t="Suchen" :x="13" :w="61.500" :s="18.500" />
        <svg class="prize" width="80" height="46">
          <circle cx="22" cy="23" r="22" fill="url(#gold)" /><path d="M12 43C12 36 18 35 18 31Q13 31 13.500 27L11.500 25L14 21Q12 11 20 8Q29 6 31 14Q32 20 29 24Q28 30 31 32Q38 34 40 39Q28 48 12 43Z" fill="#a88b45" /><path d="M15 13Q20 7 28 11M14 21L12 25M15 28Q19 30 22 27M18 33L22 38L19 44M27 31Q28 36 22 38" stroke="#7a6130" stroke-width="1" fill="none" />
          <path d="M56 2L78 4L77 26L54 24Z" fill="#33457f" /><path d="M58 4L76 6L75 23L56 22Z" fill="#cfc3c2" /><path d="M50 27L77 27L74 42L46 38Z" fill="#283c7b" /><path d="M52 28L74 28L72 37L49 35Z" fill="#e4dddd" /><ellipse cx="62" cy="32" rx="8" ry="3.500" fill="#d4c5b2" stroke="#8d7a62" />
        </svg>
      </div>
      <svg width="685" height="50" viewBox="419 0 685 50">
        <path d="M440 15V18H453V15M440 35V32H453V35M442 20.500H451.500V29.500H442ZM458.500 15V20M458.500 26V35" fill="none" stroke="#111" stroke-width="1.500" /><rect x="457" y="21" width="3" height="3" fill="#111" />
        <path d="M499 40L501.500 32A14.700 14.700 0 1 1 507 38Z" fill="#fff" /><circle cx="514" cy="25" r="12.300" fill="#7b8082" /><path d="M508.500 19Q510 17 511.500 18.500L513 21.500Q512 23 511.500 23.500Q514 27.500 517 28.500L519 26.500L522.500 28.500Q521 33 517 32.500Q508 29.500 507.500 22Z" fill="#fff" />
        <rect x="561" y="10" width="30" height="30" fill="#11508f" /><path d="M565 17L579 14V20Q577 24 579 27V36L565 33Z" fill="#fff" /><rect x="568" y="23" width="8" height="7.500" fill="#11508f" /><path d="M569.500 23V20.500Q572 16.500 574.500 20.500V23" fill="none" stroke="#11508f" stroke-width="1.600" /><circle cx="585.500" cy="22.500" r="3.800" fill="#fff" /><circle cx="586.500" cy="21.500" r="1" fill="#11508f" /><path d="M583.500 24.500L579.500 29.500" stroke="#fff" stroke-width="2.500" />
        <path d="M624 13H634L636.500 16H651V36H624Z" fill="#dda322" /><path d="M624 18H651.500V36H624Z" fill="#fbd260" /><path d="M630 37V28Q630 26.500 632 26.500H644Q646 26.500 646 28V37H641V31.500H635V37Z" fill="#3f98d8" />
        <use href="#chrome" x="685" y="10" width="30" height="30" /><circle cx="707.500" cy="32.500" r="7.500" fill="#721118" /><circle cx="707.500" cy="30.500" r="1.800" fill="#fff" /><path d="M704.500 35.500Q707.500 31.500 710.500 35.500Z" fill="#fff" />
        <path d="M755 11H776V39H753V25Z" fill="#1e78c8" /><path d="M755 11H776V17H755Z" fill="#0f62ad" /><path d="M761 17H768V25H761Z" fill="#38b6ef" /><path d="M768 17H776V25H768Z" fill="#72d3f7" /><path d="M753 27L776 39H753Z" fill="#37a1e6" /><rect x="747" y="17" width="15" height="16" rx="1" fill="#0f6cbd" /><text x="749.500" y="30" font-size="13" font-weight="700" fill="#fff">O</text>
        <path d="M814 38C810 24 821 9 834 11C836 22 830 35 826 37L827 27L822.500 20L818 27L820 36Z" fill="#304179" /><path d="M816 34C813 24 820 14 830 12C822 16 818 23 816 34Z" fill="#7c91c0" />
        <use href="#chrome" x="871" y="10" width="30" height="30" /><circle cx="893.500" cy="32" r="9.500" fill="#f1c93d" /><circle cx="893.500" cy="28.500" r="3" fill="#57420f" /><path d="M888 37V34Q893.500 30.500 899 34V37Z" fill="#57420f" />
        <use href="#chrome" x="933" y="10" width="30" height="30" /><circle cx="955.500" cy="32" r="9.500" fill="#18354d" /><path d="M949 38Q955 34 958 36L960 28L962 35Q963 38 956 41Q951 41 949 38Z" fill="#a6b4be" />
        <use href="#chrome" x="995" y="10" width="30" height="30" /><circle cx="1018" cy="32.500" r="7" fill="#18354d" /><path d="M1013 37Q1017 34 1020 35.500L1021.500 29L1023 35Q1022 39 1017 39Z" fill="#a6b4be" />
        <path d="M1063 11H1086V39H1063Z" fill="#185abd" /><path d="M1063 11H1086V18H1063Z" fill="#41a5ee" /><path d="M1063 18H1086V25H1063Z" fill="#2b7cd3" /><path d="M1063 32H1086V39H1063Z" fill="#103f91" /><rect x="1057" y="17" width="15" height="16" rx="1" fill="#185abd" /><text x="1058.500" y="29.500" font-size="12" font-weight="700" fill="#fff" textLength="12" lengthAdjust="spacingAndGlyphs">W</text>
        <path d="M861 47H902V50H861ZM923 47H974V50H923ZM1047 47H1088V50H1047Z" fill="#0f6ec6" /><path d="M902 47H912V50H902ZM1088 47H1098V50H1088Z" fill="#72a9dd" />
      </svg>
      <div class="current"><svg width="30" height="30"><use href="#tc" width="30" height="30" /></svg></div>
      <svg width="755" height="50" viewBox="1165 0 755 50">
        <path d="M1171 47H1222V50H1171Z" fill="#0f6ec6" />
        <circle cx="1190" cy="17.500" r="7" fill="#0a8fd8" /><circle cx="1202" cy="31.500" r="7" fill="#0a84cc" /><circle cx="1196" cy="24.500" r="12.500" fill="#0ba1e4" /><text x="1190.500" y="32" font-size="20" font-weight="700" fill="#fff" textLength="11.500" lengthAdjust="spacingAndGlyphs">S</text>
        <path d="M1396 22Q1404 20 1405 11Q1414 20 1405 26Z" fill="#f5a623" /><path d="M1401 38A6 6 0 0 1 1401 27A9 9 0 0 1 1417 25Q1425 26 1424.500 33Q1424 38 1419 38Z" fill="url(#cloud)" /><circle cx="1417.500" cy="17.500" r="7.500" fill="#c8261d" /><text x="1415.500" y="22" font-size="11" fill="#fff" textLength="5" lengthAdjust="spacingAndGlyphs">1</text>
        <g fill="#111">
          <text x="1436.500" y="31.500" font-size="16" textLength="36" lengthAdjust="spacingAndGlyphs">16°C</text>
          <text x="1665" y="31" font-size="14.500" textLength="29" lengthAdjust="spacingAndGlyphs">DEU</text>
          <text x="1722" y="19" font-size="14.500" textLength="52" lengthAdjust="spacingAndGlyphs">9:06 PM</text>
          <text x="1710.500" y="42" font-size="14.500" textLength="75.500" lengthAdjust="spacingAndGlyphs">10/06/2023</text>
        </g>
        <path d="M1487 21.500H1489.500V24H1488M1489.500 24V28H1487" fill="none" stroke="#222" stroke-width="1.200" />
        <path d="M1505 32A4.500 4.500 0 0 1 1505 24A7 7 0 0 1 1516 19Q1520 21 1520 25L1515 32Z" fill="#777" stroke="#333" /><circle cx="1516.500" cy="29.500" r="5.500" fill="#d32533" /><path d="M1514.500 27.500L1518.500 31.500M1518.500 27.500L1514.500 31.500" stroke="#fff" stroke-width="1.500" />
        <rect x="1537" y="20" width="14" height="10" fill="#000" stroke="#111" /><path d="M1552 23V27M1533 19H1538V22Q1535.500 25 1533 22ZM1534 17V19M1537 17V19M1535.500 24V30H1538" fill="none" stroke="#111" stroke-width="1.500" />
        <path d="M1565 31Q1566 19 1580 17M1569 32Q1570 23 1580 21.500M1573 32Q1574 27 1580 26" fill="none" stroke="#333" stroke-width="1.300" /><circle cx="1579" cy="30.500" r="1.700" />
        <path d="M1592.500 22H1596L1600 18V31L1596 27H1592.500Z" fill="none" stroke="#111" stroke-width="1.200" /><path d="M1602.500 22Q1604.500 24.500 1602.500 27" fill="none" stroke="#111" stroke-width="1.200" /><path d="M1605 20Q1609 24.500 1605 29.500M1608 17.500Q1614 24.500 1608 32" fill="none" stroke="#999" stroke-width="1.200" />
        <path d="M1638 31L1634 34L1634.500 29L1641 17Q1643 15 1644.500 18ZM1634 23Q1626 27 1627.500 33Q1633 35 1637 24Q1636 20 1634 23M1641 25H1646L1645 29" fill="none" stroke="#111" stroke-width="1.400" />
        <path d="M1811 14H1815V34H1811ZM1818 34V16L1824 26L1836 13V20L1824 33L1821 28V34Z" fill="#111" /><circle cx="1835" cy="31" r="9.500" fill="#fff" stroke="#777" /><text x="1831" y="36.500" font-size="15" font-weight="600" textLength="8" lengthAdjust="spacingAndGlyphs">1</text>
        <path d="M1869.500 15.500H1888.500V30.500H1882L1879 34L1876 30.500H1869.500Z" fill="none" stroke="#222" stroke-width="1.200" /><path d="M1914.500 0V50" stroke="#9aa3ad" />
      </svg>
    </footer>
  </div>
</template>

<style>
body { margin: 0; background: #000; overflow: hidden; }
</style>

<style scoped>
.app { width: 1920px; height: 1080px; background: #000; color: #acacac; font-family: "Open Sans", "Noto Sans", sans-serif; display: flex; flex-direction: column; overflow: hidden; }
svg { display: block; flex: none; overflow: visible; }
.defs { position: absolute; }
.title { height: 29px; flex: none; background: #fff; color: #000; display: flex; box-sizing: border-box; padding: 4px 26px 0 2px; }
.winbtns { margin-left: auto; display: flex; gap: 46px; padding-top: 3px; }
.menu { height: 32px; flex: none; display: flex; padding-top: 6.500px; box-sizing: border-box; color: #dcdcdc; }
.low { margin-top: 1px; }
.account { margin-left: auto; margin-top: -7.500px; color: #6cacd0; display: grid; grid-auto-rows: 14px; }
.tools { height: 26px; flex: none; display: flex; padding-top: 4.500px; box-sizing: border-box; }
.sep { width: 1px; height: 15px; margin: 2px 8px 0 10px; background: #555; flex: none; }
.ic { fill: none; stroke: #e4e4e4; stroke-width: 2; stroke-linejoin: round; }
.lit { color: #e4e4e4; }
.dim { color: #888; }
.right { display: flex; margin-left: auto; padding-right: 6px; }
.acct { height: 27px; flex: none; display: flex; box-sizing: border-box; padding-top: 3px; border-top: 1px solid #848484; border-bottom: 1px solid #848484; }
.acct .right { padding-right: 8.500px; }
.white { color: #f2f2f2; }
.red { color: #e61212; }
.blue { color: #2f7fe0; }
.yellow { color: #f4f41c; }
.lime { color: #1be81b; }
.grey { color: #9c9c9c; }
.pale { color: #ddd; }
.dark { color: #3c3c3c; }
.navy { color: #0c0cd8; }
.green { color: #1fe087; }
.bold { font-weight: 700; color: #fff; }
.head { height: 72px; flex: none; margin: 0 8px 0 0; box-sizing: border-box; padding-top: 5px; background: linear-gradient(#000 0 2px, #2b2b2b 2px, #181818 14px, #000 29px); }
.hrow { display: flex; height: 26px; padding-left: 2px; }
.hrow > .t { margin-top: 2px; }
.hrow .right { padding-right: 0; }
.on { width: 24px; height: 21px; margin: 0 0 0 6px; padding-top: 2px; box-sizing: border-box; background: #4583ba; color: #fff; }
.hrow2 { display: flex; height: 30px; color: #e6e6e6; }
.hrow2 .right { padding-right: 5px; }
.dots { margin-top: 2px; }
.charts { height: 818px; flex: none; position: relative; }
.w { stroke: #6a6a6a; stroke-width: 1.200; fill: none; }
.g { stroke: #0c4a0c; stroke-width: 1.200; fill: none; }
.tip { position: absolute; left: 2px; top: 2px; width: 190px; height: 295px; box-sizing: border-box; border: 3px solid #6a96dd; background: #000; padding: 3px 3px 0 3px; color: #f2f2f2; }
.line { display: flex; justify-content: center; height: 22.700px; }
.pair { justify-content: space-between; }
.in { padding-left: 18px; }
.grey.line { color: #9c9c9c; }
.r18 { height: 18.700px; }
.r19 { height: 18.800px; }
.r21 { height: 21.400px; }
.r22 { height: 22.300px; }
.up { margin-top: -1.500px; }
.tip hr { height: 2px; border: 0; margin: 0 0 5px; background: #7c7c7c; }
.tip .last { margin-bottom: 1px; }
.edge { position: absolute; right: 2px; top: -70px; width: 2px; height: 888px; background: #777; }
.tabs { height: 26px; flex: none; box-shadow: inset 0 2px #858585; }
.task { height: 50px; flex: none; display: flex; background: #d4dae2; color: #222; }
.start { width: 61px; display: flex; align-items: center; padding-left: 20px; box-sizing: border-box; flex: none; }
.search { width: 358px; height: 49px; flex: none; box-sizing: border-box; background: #fff; display: flex; align-items: center; padding-left: 14px; }
.search .t { margin-top: 4px; }
.prize { margin-left: auto; margin-right: 11px; }
.current { width: 61px; box-sizing: border-box; flex: none; background: #eceff3; border-bottom: 3px solid #0f6ec6; display: flex; align-items: center; justify-content: center; }
</style>
